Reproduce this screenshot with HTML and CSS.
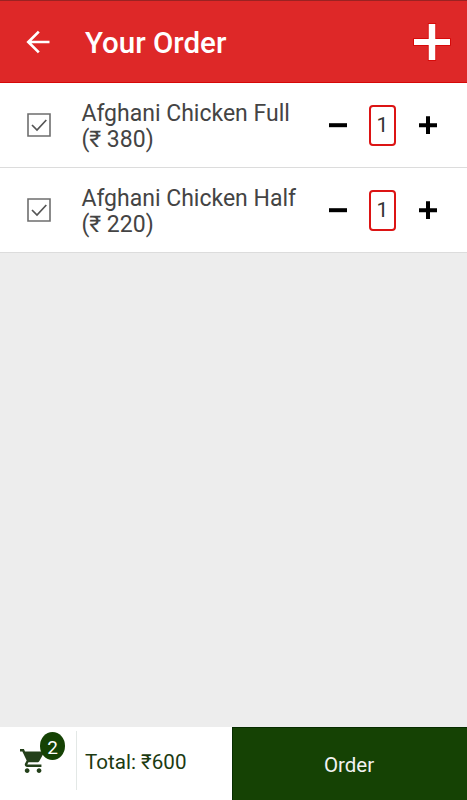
FILE: index.html
```html
<!DOCTYPE html>
<html lang="en">
<head>
<meta charset="utf-8">
<title>Your Order</title>
<link rel="stylesheet" href="styles.css">
</head>
<body>
<div class="screen">
  <header class="bar">
    <svg class="back" width="24" height="24" viewBox="0 0 24 24"><path d="M12.800 1.600 2.300 12l10.500 10.400M2.300 12H23.500" fill="none" stroke="#fff" stroke-width="2.700"/></svg>
    <h1 class="title">Your Order</h1>
    <svg class="add" width="38" height="38" viewBox="0 0 38 38"><path d="M15.700 1h6.600v15H37v6H22.300v15h-6.600V22H1v-6h14.700z" fill="#fff" stroke="#d60000" stroke-width="1.600" paint-order="stroke"/></svg>
  </header>
  <main class="items">
    <section class="item">
      <svg class="check" width="24" height="24" viewBox="0 0 24 24"><path d="M1 1h22v22H1z" fill="none" stroke="#6e6e6e" stroke-width="1.600"/><path d="m5 12 5 5L19.300 7" fill="none" stroke="#555" stroke-width="1.700"/></svg>
      <p class="name">Afghani Chicken Full<br>(₹ 380)</p>
      <svg class="minus" width="18" height="18" viewBox="0 0 18 18"><path d="M0 7.200h18v4H0z"/></svg>
      <span class="qty">1</span>
      <svg class="plus" width="18" height="18" viewBox="0 0 18 18"><path d="M7 .3h4v7h7v4h-7V18H7v-6.700H0v-4h7z"/></svg>
    </section>
    <section class="item">
      <svg class="check" width="24" height="24" viewBox="0 0 24 24"><path d="M1 1h22v22H1z" fill="none" stroke="#6e6e6e" stroke-width="1.600"/><path d="m5 12 5 5L19.300 7" fill="none" stroke="#555" stroke-width="1.700"/></svg>
      <p class="name">Afghani Chicken Half<br>(₹ 220)</p>
      <svg class="minus" width="18" height="18" viewBox="0 0 18 18"><path d="M0 7.200h18v4H0z"/></svg>
      <span class="qty">1</span>
      <svg class="plus" width="18" height="18" viewBox="0 0 18 18"><path d="M7 .3h4v7h7v4h-7V18H7v-6.700H0v-4h7z"/></svg>
    </section>
  </main>
  <footer class="foot">
    <div class="cart">
      <svg class="trolley" width="25" height="24" viewBox="1 2 21 20" preserveAspectRatio="none"><path d="M7 18c-1.100 0-1.990.9-1.990 2S5.900 22 7 22s2-.9 2-2-.9-2-2-2zM1 2v2h2l3.600 7.590-1.350 2.450c-.16.280-.25.610-.25.960 0 1.100.9 2 2 2h12v-2H7.420c-.14 0-.25-.11-.25-.25l.03-.12.900-1.630h7.450c.75 0 1.410-.41 1.750-1.030l3.580-6.490A1 1 0 0 0 20 4H5.210l-.94-2H1zm16 16c-1.100 0-1.990.9-1.990 2s.89 2 1.990 2 2-.9 2-2-.9-2-2-2z" fill="#24401a"/></svg>
      <span class="badge">2</span>
    </div>
    <div class="total">Total: ₹600</div>
    <div class="order">Order</div>
  </footer>
</div>
</body>
</html>
```

FILE: styles.css
```css
body {
  margin: 0;
  font-family: Roboto, "Noto Sans", sans-serif;
}
.screen {
  display: flex;
  flex-direction: column;
  height: 800px;
  background: #ededed;
}
.bar {
  box-sizing: border-box;
  display: flex;
  align-items: center;
  height: 83px;
  padding: 1px 16px 0 26px;
  background: #de2828;
  border-top: 1px solid #9b2222;
  border-bottom: 1px solid #d60808;
}
.title {
  flex: 1;
  margin: 2px 0 0 35px;
  font-size: 29.5px;
  font-weight: 500;
  line-height: 40px;
  color: #fff;
}
.item {
  box-sizing: border-box;
  display: flex;
  align-items: center;
  height: 85px;
  padding: 0 30px 0 27px;
  background: #fff;
  border-bottom: 1px solid #dcdcdc;
}
.check {
  margin-bottom: 1px;
}
.name {
  flex: 1;
  margin: 4px 0 0 30.4px;
  font-size: 23px;
  line-height: 26px;
  color: #444;
  white-space: nowrap;
}
.minus,
.plus {
  margin-bottom: 1px;
}
.qty {
  box-sizing: border-box;
  width: 27px;
  height: 41px;
  margin: 1px 23px 0 22px;
  border: 2px solid #dc1414;
  border-radius: 4px;
  font-size: 21px;
  line-height: 37px;
  text-align: center;
  color: #333;
}
.foot {
  display: flex;
  height: 73px;
  margin-top: auto;
  background: #fff;
}
.cart {
  position: relative;
  box-sizing: border-box;
  width: 77px;
  height: 59px;
  margin-top: 4px;
  padding: 18px 0 0 19.5px;
  border-right: 1px solid #e3e8e6;
}
.trolley {
  display: block;
}
.badge {
  position: absolute;
  left: 40px;
  top: 1px;
  width: 25px;
  height: 28px;
  border-radius: 50%;
  background: #154204;
  color: #fff;
  font-size: 19px;
  line-height: 31px;
  text-align: center;
}
.total {
  flex: 1;
  padding-left: 8px;
  font-size: 20.6px;
  line-height: 70px;
  color: #1c3b12;
}
.order {
  box-sizing: border-box;
  width: 235px;
  padding-right: 2px;
  border-top: 1px solid #062c00;
  border-left: 1px solid #062c00;
  background: #154204;
  color: #f2f2f2;
  font-size: 20.5px;
  line-height: 74px;
  text-align: center;
}
```
